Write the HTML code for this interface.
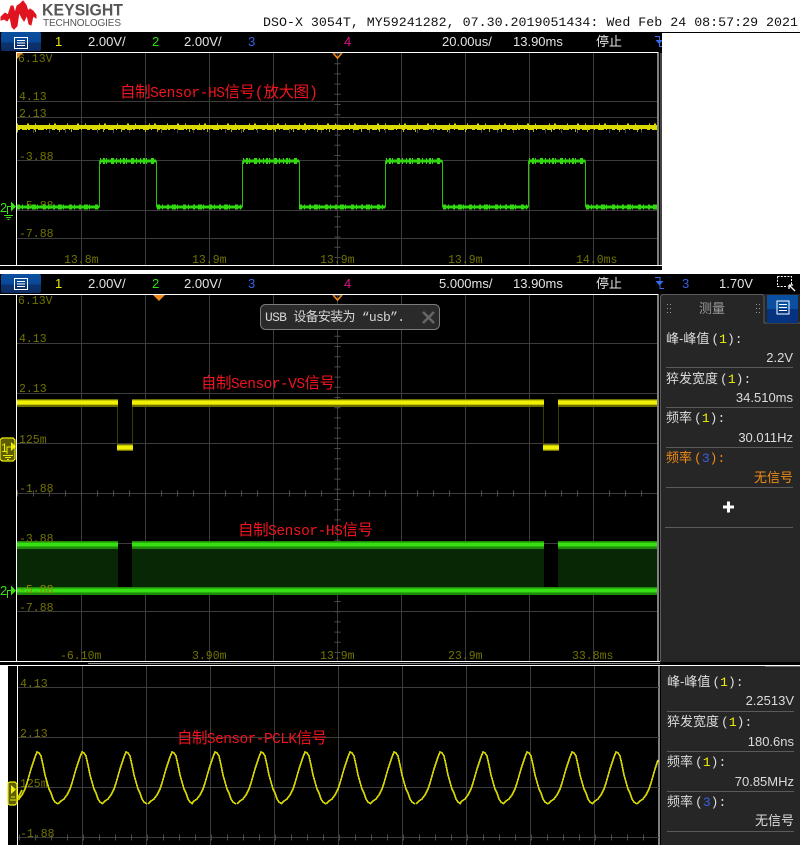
<!DOCTYPE html>
<html><head><meta charset="utf-8"><style>
html,body{margin:0;padding:0;background:#fff;width:802px;height:848px;overflow:hidden}
svg{display:block}
text{font-family:"Liberation Sans","WenQuanYi Zen Hei","Noto Sans CJK SC",sans-serif}
.m{font-family:"Liberation Mono","WenQuanYi Zen Hei","Noto Sans CJK SC",monospace}
.l{font-family:"Liberation Mono",monospace;font-size:11.5px;fill:#727200}
.t{font-size:13px;fill:#e4e4e4}
.c{font-size:13px;fill:#dcdcdc}
.v{font-size:13px;fill:#dcdcdc;text-anchor:end}
.r{fill:#f0141e;font-size:15.5px}
.g{stroke:#3c3c3c;stroke-width:1;shape-rendering:crispEdges}
.w{stroke:#fff;stroke-width:1;shape-rendering:crispEdges}
.s{stroke:#5a5a5a;stroke-width:1;shape-rendering:crispEdges}
</style></head><body>
<svg xmlns="http://www.w3.org/2000/svg" width="802" height="848" viewBox="0 0 802 848">
<defs>
<linearGradient id="b" x1="0" y1="0" x2="0" y2="1"><stop offset="0" stop-color="#0a4fa0"/><stop offset=".55" stop-color="#0a4796"/><stop offset=".56" stop-color="#0b3270"/><stop offset="1" stop-color="#0b2d64"/></linearGradient>
<g id="menu"><rect x="0" y="0" width="13" height="11" fill="none" stroke="#fff"/><path d="M2.5 3h8M2.5 5.5h8M2.5 8h8" stroke="#fff" fill="none"/></g>
<path id="wv" d="M0 804L3 801L6 799L9 795L12 789L14 783L16 776L18 769L20 763L22 757L24 752L26 753L28 756L30 765L32 775L34 782L36 789L38 793L40 799L42 802L45 804" fill="none" stroke="#d4d400" stroke-width="1.700"/>
</defs>
<rect width="802" height="848" fill="#fff"/>

<!-- logo -->
<path d="M1 17L5 13L8 15L11 6L13 6L15 13L17 6L20 4L23 1L26 5L28 11L30 9L33 11L36 15L36 18L33 16L31 25L29 24L27 15L24 21L22 18L19 12L17 26L14 29L12 27L10 17L7 21L4 19L1 20Z" fill="#e0141e" stroke="#e0141e" stroke-width="1"/>
<text x="42" y="15.500" font-size="16.500" font-weight="bold" fill="#565656" textLength="81" lengthAdjust="spacingAndGlyphs">KEYSIGHT</text>
<text x="43" y="26" font-size="10" fill="#565656" textLength="78" lengthAdjust="spacing">TECHNOLOGIES</text>
<text class="m" x="263" y="26" font-size="13.300" fill="#111" textLength="535" lengthAdjust="spacing">DSO-X 3054T, MY59241282, 07.30.2019051434: Wed Feb 24 08:57:29 2021</text>

<!-- panel 1 -->
<rect x="0" y="32" width="800" height="1" fill="#000"/>
<rect x="0" y="33" width="662" height="233" fill="#000"/>
<rect x="660" y="53" width="2" height="213" fill="#444"/>
<rect x="662" y="33" width="140" height="237" fill="#fff"/>
<rect x="1" y="32" width="40" height="19" rx="2" fill="url(#b)"/>
<use href="#menu" x="14.500" y="37.500"/>
<text x="55" y="46" class="t" style="fill:#e8e800">1</text>
<text x="88" y="46" class="t">2.00V/</text>
<text x="152" y="46" class="t" style="fill:#2fe010">2</text>
<text x="184" y="46" class="t">2.00V/</text>
<text x="248" y="46" class="t" style="fill:#3a5fe0">3</text>
<text x="344" y="46" class="t" style="fill:#e0108a">4</text>
<text x="442" y="46" class="t">20.00us/</text>
<text x="513" y="46" class="t">13.90ms</text>
<text x="596" y="46" class="t">停止</text>
<path d="M655 36.500h4.500v10h2.500" stroke="#3a6cf0" fill="none"/>
<path d="M655.500 40h6.500v1l-3 3z" fill="#3a6cf0"/>
<path d="M17 52.500H658.500M16.500 52V265M658 52V265M0 265.500H662" class="w" fill="none"/>
<g class="g">
<path d="M81.500 53V265M145.500 53V265M209.500 53V265M273.500 53V265M337.500 53V265M401.500 53V265M465.500 53V265M529.500 53V265M593.500 53V265" fill="none"/>
<path d="M17 101.500H657M17 117.500H657M17 160.500H657M17 210.500H657M17 238.500H657" fill="none"/>
</g>
<line x1="337.500" y1="53" x2="337.500" y2="265" stroke="#4a4a4a" stroke-width="6" stroke-dasharray="1 9.200"/>
<line x1="17" y1="130" x2="657" y2="130" stroke="#4a4a4a" stroke-width="6" stroke-dasharray="1 15"/>
<path d="M17 53h6l-6 6z" fill="#ef8a1a"/>
<path d="M333 53l4.500 5 4.500-5" fill="none" stroke="#ef8a1a" stroke-width="1.600"/>
<text x="18" y="62" class="l">6.13V</text>
<text x="19" y="100" class="l">4.13</text>
<text x="19" y="117" class="l">2.13</text>
<text x="19" y="160" class="l">-3.88</text>
<text x="19" y="237" class="l">-7.88</text>
<text x="64" y="263" class="l">13.8m</text>
<text x="192" y="263" class="l">13.9m</text>
<text x="320" y="263" class="l">13.9m</text>
<text x="448" y="263" class="l">13.9m</text>
<text x="576" y="263" class="l">14.0ms</text>
<text class="m r" x="120" y="97" textLength="198" lengthAdjust="spacing">自制<tspan font-size="14.500">Sensor-HS</tspan>信号(放大图)</text>
<!-- yellow trace 1 -->
<g fill="none" stroke="#dada00" shape-rendering="crispEdges">
<line x1="17" x2="657" y1="127" y2="127" stroke-width="4"/>
<line x1="17" x2="657" y1="128.500" y2="128.500" stroke-width="3" stroke-dasharray="3 2 5 1 2 4 1 3 6 2 1 5"/>
<line x1="17" x2="657" y1="125" y2="125" stroke-width="3" stroke-dasharray="1 9 2 6 1 13 1 4 2 11"/>
<line x1="17" x2="657" y1="130.500" y2="130.500" stroke-width="3" stroke-dasharray="1 17 1 23 1 11 1 31" stroke-opacity=".8"/>
</g>
<text x="19" y="209" class="l">-5.88</text>
<!-- green trace 1 -->
<path d="M17 207H99.500V161H156.500V207H242.500V161H299.500V207H385.500V161H442.500V207H528.500V161H585.500V207H657" fill="none" stroke="#2cc00e" stroke-width="1" shape-rendering="crispEdges"/>
<g fill="none" stroke="#33d90f" shape-rendering="crispEdges">
<path d="M17 207H99M157 207H242M300 207H385M443 207H528M586 207H657M100 161H156M243 161H299M386 161H442M529 161H585" stroke-width="3"/>
<path d="M17 207H99M157 207H242M299 207H385M443 207H528M586 207H657" stroke-width="5" stroke-dasharray="3 2 1 4 2 3 4 1 1 5"/>
<path d="M100 161H156M243 161H299M386 161H442M529 161H585" stroke-width="6" stroke-dasharray="1 2 2 1 1 4 3 2 1 3"/>
</g>
<path d="M7.500 214V206.500H11M4 215.500h9M6 217.500h5M7.500 219.500h2" fill="none" stroke="#3be015"/>
<text x="0" y="212" font-size="13" fill="#3be015">2</text>
<path d="M11 201.500l5 5-5 5z" fill="#3be015"/>

<!-- white gap -->
<rect x="0" y="266" width="802" height="4" fill="#000"/>
<rect x="662" y="266" width="140" height="4" fill="#fff"/>

<!-- panel 2 -->
<rect x="0" y="274" width="800" height="388" fill="#000"/>
<rect x="1" y="274" width="40" height="19" rx="2" fill="url(#b)"/>
<use href="#menu" x="14.500" y="278.500"/>
<text x="55" y="288" class="t" style="fill:#e8e800">1</text>
<text x="88" y="288" class="t">2.00V/</text>
<text x="152" y="288" class="t" style="fill:#2fe010">2</text>
<text x="184" y="288" class="t">2.00V/</text>
<text x="248" y="288" class="t" style="fill:#3a5fe0">3</text>
<text x="344" y="288" class="t" style="fill:#e0108a">4</text>
<text x="439" y="288" class="t">5.000ms/</text>
<text x="513" y="288" class="t">13.90ms</text>
<text x="596" y="288" class="t">停止</text>
<path d="M655 277.500h5v11h4" stroke="#3a6cf0" fill="none"/>
<path d="M655.500 281h8l-4 4.500z" fill="#3a6cf0"/>
<text x="682" y="288" class="t" style="fill:#3a5fe0">3</text>
<text x="719" y="288" class="t">1.70V</text>
<path d="M777.500 276.500h14v9M777.500 276.500v10h10" fill="none" stroke="#fff" stroke-dasharray="2 1.300"/>
<path d="M789 285l6 6M789 285v4M789 285h4" stroke="#fff" fill="none" stroke-width="1.300"/>
<path d="M0 294.500H658.500M16.500 294V661M658 294V661M0 661.500H660" class="w" fill="none"/>
<g class="g" fill="none">
<path d="M81.500 295V661M145.500 295V661M209.500 295V661M273.500 295V661M337.500 295V661M401.500 295V661M465.500 295V661M529.500 295V661M593.500 295V661"/>
<path d="M17 343.500H657M17 393.500H657M17 443.500H657M17 493.500H657M17 543.500H657M17 593.500H657M17 611.500H657"/>
</g>
<line x1="337.500" y1="295" x2="337.500" y2="661" stroke="#4a4a4a" stroke-width="6" stroke-dasharray="1 9.200"/>
<line x1="17" y1="493.500" x2="657" y2="493.500" stroke="#4a4a4a" stroke-width="6" stroke-dasharray="1 15" stroke-dashoffset="-16"/>
<path d="M153 295h12l-6 6z" fill="#ef8a1a"/>
<path d="M333 295l4.500 5 4.500-5" fill="none" stroke="#ef8a1a" stroke-width="1.600"/>
<text x="18" y="304" class="l">6.13V</text>
<text x="19" y="342" class="l">4.13</text>
<text x="19" y="392" class="l">2.13</text>
<text x="19" y="443" class="l">125m</text>
<text x="19" y="492" class="l">-1.88</text>
<text x="60" y="659" class="l">-6.10m</text>
<text x="192" y="659" class="l">3.90m</text>
<text x="320" y="659" class="l">13.9m</text>
<text x="448" y="659" class="l">23.9m</text>
<text x="572" y="659" class="l">33.8ms</text>
<text x="19" y="611" class="l">-7.88</text>
<!-- yellow bursts -->
<path d="M117.500 406V445M132.500 406V445M543.500 406V445M558.500 406V445" stroke="#3c3c00" shape-rendering="crispEdges" fill="none"/>
<g shape-rendering="crispEdges">
<path d="M17 399h101v8H17zM132 399h412v8H132zM558 399h99v8H558z" fill="#6e6e00"/>
<path d="M17 400h101v5H17zM132 400h412v5H132zM558 400h99v5H558z" fill="#c8c800"/>
<path d="M17 401h101v3H17zM132 401h412v3H132zM558 401h99v3H558z" fill="#f0f000"/>
<path d="M117 444h16v7h-16zM543 444h16v7h-16z" fill="#787800"/>
<path d="M117 445h16v5h-16zM543 445h16v5h-16z" fill="#c8c800"/>
<path d="M117 446h16v3h-16zM543 446h16v3h-16z" fill="#f0f000"/>
<!-- green bursts -->
<path d="M17 548h101v39H17zM132 548h412v39H132zM558 548h99v39H558z" fill="#082805"/>
<path d="M17 541h101v8H17zM132 541h412v8H132zM558 541h99v8H558z" fill="#1f8a0a"/>
<path d="M17 542h101v5H17zM132 542h412v5H132zM558 542h99v5H558z" fill="#28b00e"/>
<path d="M17 543h101v3H17zM132 543h412v3H132zM558 543h99v3H558z" fill="#36e012"/>
<path d="M17 587h640v8H17z" fill="#1f8a0a"/>
<path d="M17 588h640v5H17z" fill="#28b00e"/>
<path d="M17 589h640v3H17z" fill="#36e012"/>
</g>
<text x="19" y="542" class="l">-3.88</text>
<text x="19" y="593" class="l" style="fill:#8a8a00">-5.88</text>
<text class="m r" x="201" y="388" textLength="134" lengthAdjust="spacing">自制<tspan font-size="14.500">Sensor-VS</tspan>信号</text>
<text class="m r" x="238" y="535" textLength="135" lengthAdjust="spacing">自制<tspan font-size="14.500">Sensor-HS</tspan>信号</text>
<!-- ch markers -->
<path d="M2 438h11l2 2v19l-2 2H2l-2-2V440z" fill="#5c5c00" stroke="#f0f000" stroke-width="1.200"/>
<text x="1" y="452" font-size="12" fill="#f0f000">1</text>
<path d="M7 454V447H11" fill="none" stroke="#f0f000"/>
<path d="M3 455.500h10M5 457.500h6M7 459.500h2" stroke="#f0f000" fill="none"/>
<path d="M11 442l5 4.500-5 4.500z" fill="#f0f000"/>
<text x="0" y="595" font-size="13" fill="#3be015">2</text>
<path d="M7.500 598V590.500H11" fill="none" stroke="#3be015"/>
<path d="M11 585.500l5 5-5 5z" fill="#3be015"/>
<!-- popup -->
<rect x="260.500" y="304.500" width="179" height="25" rx="5" fill="#2a2a2a" stroke="#7c7c7c"/>
<text class="m" x="265" y="321" font-size="13" fill="#d4d4d4" textLength="140" lengthAdjust="spacing">USB 设备安装为 “usb”.</text>
<path d="M423 312l11 11M434 312l-11 11" stroke="#666" stroke-width="2.600"/>
<!-- right panel -->
<rect x="660" y="294" width="140" height="368" fill="#262626"/>
<path d="M660.500 662V297l2-2.500h100l1.500 2V323H800" fill="none" stroke="#5a5a5a"/>
<rect x="767" y="295" width="31" height="14" fill="#0a4fa0"/>
<rect x="767" y="309" width="31" height="14" fill="#063380"/>
<rect x="777" y="301" width="12" height="13" fill="none" stroke="#fff"/>
<path d="M779 304.500h8M779 307.500h8M779 310.500h8" stroke="#fff" fill="none"/>
<text x="699" y="313" font-size="13" fill="#9a9a9a">测量</text>
<path d="M667 304.500h1M670 304.500h1M667 308.500h1M670 308.500h1M667 312.500h1M670 312.500h1M756 304.500h1M759 304.500h1M756 308.500h1M759 308.500h1M756 312.500h1M759 312.500h1" stroke="#999" fill="none"/>
<text x="666" y="343" class="c">峰-峰值<tspan class="m" dx="2">(<tspan fill="#f0f000">1</tspan>):</tspan></text>
<text x="793" y="362" class="v">2.2V</text>
<line x1="666" x2="793" y1="367.500" y2="367.500" class="s"/>
<text x="666" y="383" class="c">猝发宽度<tspan class="m" dx="2">(<tspan fill="#f0f000">1</tspan>):</tspan></text>
<text x="793" y="402" class="v">34.510ms</text>
<line x1="666" x2="793" y1="407.500" y2="407.500" class="s"/>
<text x="666" y="422" class="c">频率<tspan class="m" dx="2">(<tspan fill="#f0f000">1</tspan>):</tspan></text>
<text x="793" y="442" class="v">30.011Hz</text>
<line x1="666" x2="793" y1="447.500" y2="447.500" class="s"/>
<text x="666" y="462" class="c" style="fill:#f08a14">频率<tspan class="m" dx="2">(<tspan fill="#3a5fe0">3</tspan>):</tspan></text>
<text x="793" y="482" class="v" style="fill:#f08a14">无信号</text>
<line x1="666" x2="793" y1="487.500" y2="487.500" class="s"/>
<path d="M723 507h11M728.500 501.500v11" stroke="#fff" stroke-width="3" fill="none"/>
<line x1="665" x2="793" y1="527.500" y2="527.500" class="s"/>

<!-- panel 3 -->
<rect x="0" y="662" width="802" height="3" fill="#000"/>
<rect x="800" y="662" width="2" height="3" fill="#fff"/>
<line x1="88" x2="660" y1="663.500" y2="663.500" stroke="#8a8a8a" shape-rendering="crispEdges"/>
<rect x="0" y="665" width="802" height="183" fill="#fff"/>
<rect x="8" y="666" width="792" height="179" fill="#000"/>
<path d="M17.500 666V845M659 666V845" class="w" fill="none"/>
<rect x="661" y="666" width="139" height="179" fill="#262626"/>
<line x1="765" x2="800" y1="666.500" y2="666.500" stroke="#666" shape-rendering="crispEdges"/>
<g class="g" fill="none">
<path d="M82.500 666V845M146.500 666V845M210.500 666V845M274.500 666V845M338.500 666V845M402.500 666V845M466.500 666V845M530.500 666V845M594.500 666V845"/>
<path d="M18 687.500H659M18 737.500H659M18 787.500H659M18 837.500H659"/>
</g>
<line x1="18" y1="837.500" x2="658" y2="837.500" stroke="#4a4a4a" stroke-width="6" stroke-dasharray="1 15" stroke-dashoffset="-1"/>
<text x="20" y="687" class="l">4.13</text>
<text x="20" y="737" class="l">2.13</text>
<text x="20" y="787" class="l">125m</text>
<text x="20" y="837" class="l">-1.88</text>
<g shape-rendering="crispEdges">
<use href="#wv" x="13"/><use href="#wv" x="58"/><use href="#wv" x="102"/><use href="#wv" x="148"/><use href="#wv" x="191"/><use href="#wv" x="237"/><use href="#wv" x="281"/><use href="#wv" x="326"/><use href="#wv" x="370"/><use href="#wv" x="416"/><use href="#wv" x="459"/><use href="#wv" x="503"/><use href="#wv" x="548"/><use href="#wv" x="592"/>
<path d="M637 804L640 801L643 799L646 795L649 789L651 783L653 776L655 769L658 760" fill="none" stroke="#d4d400" stroke-width="1.700"/>
<path d="M18 798L20 794L22 790" fill="none" stroke="#d4d400" stroke-width="1.700"/>
</g>
<path d="M10 782h5l2 2v19l-2 2h-5l-2-1V783z" fill="#5c5c00" stroke="#f0f000" stroke-width="1.200"/>
<path d="M11 785l5 4.500-5 4.500z" fill="#f0f000"/>
<path d="M10 800h6M11 797h4" stroke="#f0f000" fill="none"/>
<text class="m r" x="177" y="743" textLength="150" lengthAdjust="spacing">自制<tspan font-size="14.500">Sensor-PCLK</tspan>信号</text>
<text x="667" y="686" class="c">峰-峰值<tspan class="m" dx="2">(<tspan fill="#f0f000">1</tspan>):</tspan></text>
<text x="794" y="705" class="v">2.2513V</text>
<line x1="667" x2="794" y1="711.500" y2="711.500" class="s"/>
<text x="667" y="726" class="c">猝发宽度<tspan class="m" dx="2">(<tspan fill="#f0f000">1</tspan>):</tspan></text>
<text x="794" y="746" class="v">180.6ns</text>
<line x1="667" x2="794" y1="751.500" y2="751.500" class="s"/>
<text x="667" y="766" class="c">频率<tspan class="m" dx="2">(<tspan fill="#f0f000">1</tspan>):</tspan></text>
<text x="794" y="786" class="v">70.85MHz</text>
<line x1="667" x2="794" y1="791.500" y2="791.500" class="s"/>
<text x="667" y="806" class="c">频率<tspan class="m" dx="2">(<tspan fill="#3a5fe0">3</tspan>):</tspan></text>
<text x="794" y="825" class="v">无信号</text>
<line x1="667" x2="794" y1="831.500" y2="831.500" class="s"/>
</svg>
</body></html>
